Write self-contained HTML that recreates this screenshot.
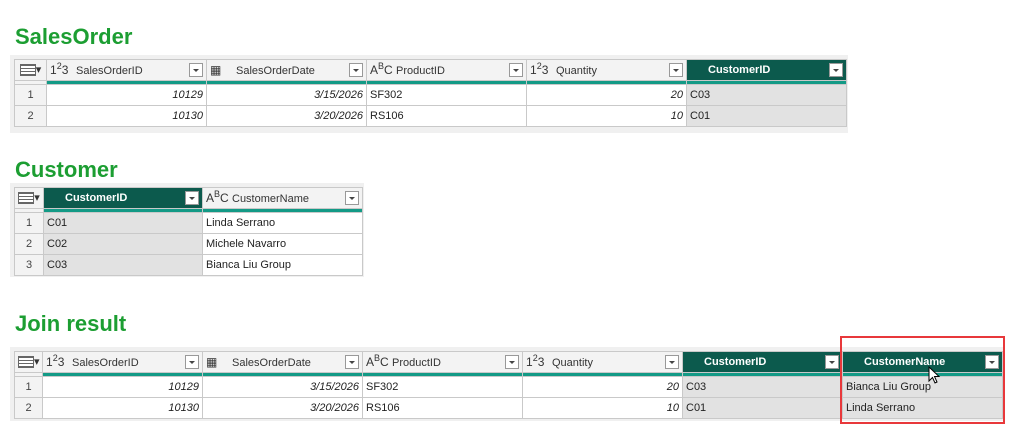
<!DOCTYPE html><html><head><style>
body{margin:0;width:1015px;height:431px;background:#fff;position:relative;overflow:hidden;font-family:"Liberation Sans",Arial,sans-serif;}
h1{position:absolute;margin:0;font-size:22px;font-weight:bold;color:#1c9e32;left:15px;}
.bg{position:absolute;background:#f0f0f0;}
table{position:absolute;border-collapse:collapse;table-layout:fixed;font-size:11px;color:#222;}
td{border:1px solid #c9c9c9;height:20px;padding:0 3px;white-space:nowrap;overflow:hidden;background:#fff;vertical-align:middle;line-height:14px;}
sup,sub{line-height:0;font-size:9px;}
tr.h td{background:#f3f3f3;height:20px;position:relative;font-size:11px;color:#333;}
tr.h td.s{background:#0c5a4d;color:#fff;font-weight:bold;}
tr.t td{height:3px;padding:0;background:#139a86;border-top:none;border-bottom:none;line-height:3px;font-size:1px;}
td.n{text-align:center;color:#444;background:#f3f3f3;}
td.r{text-align:right;font-style:italic;}
td.g{background:#e2e2e2;}
.dd{position:absolute;right:3px;top:3px;width:12px;height:12px;border:1px solid #999;background:#fff;}
.dd:after{content:"";position:absolute;left:3px;top:5px;border-left:3px solid transparent;border-right:3px solid transparent;border-top:3px solid #444;}
.ic{display:inline-block;width:26px;font-size:12px;color:#333;}
.s .lbl{padding-left:18px;}
.tb{display:inline-block;width:14px;height:10px;border:1px solid #666;background:repeating-linear-gradient(#666 0 1px,#fff 1px 3px);vertical-align:middle;}
</style></head><body>
<h1 style="top:24px">SalesOrder</h1>
<div class="bg" style="left:10px;top:55px;width:838px;height:78px"></div>
<table style="left:14px;top:59px;width:832px">
<colgroup><col style="width:32px"><col style="width:160px"><col style="width:160px"><col style="width:160px"><col style="width:160px"><col style="width:160px"></colgroup>
<tr class="h"><td class="n"><span class="tb"></span>▾</td><td><span class="ic">1<sup>2</sup>3</span>SalesOrderID<span class="dd"></span></td><td><span class="ic">▦</span>SalesOrderDate<span class="dd"></span></td><td><span class="ic">A<sup>B</sup>C</span>ProductID<span class="dd"></span></td><td><span class="ic">1<sup>2</sup>3</span>Quantity<span class="dd"></span></td><td class="s"><span class="lbl">CustomerID</span><span class="dd"></span></td></tr>
<tr class="t"><td style="background:#f3f3f3"></td><td></td><td></td><td></td><td></td><td></td></tr>
<tr><td class="n">1</td><td class="r">10129</td><td class="r">3/15/2026</td><td>SF302</td><td class="r">20</td><td class="g">C03</td></tr>
<tr><td class="n">2</td><td class="r">10130</td><td class="r">3/20/2026</td><td>RS106</td><td class="r">10</td><td class="g">C01</td></tr>
</table>

<h1 style="top:157px">Customer</h1>
<div class="bg" style="left:10px;top:183px;width:354px;height:94px"></div>
<table style="left:14px;top:187px;width:348px">
<colgroup><col style="width:29px"><col style="width:159px"><col style="width:160px"></colgroup>
<tr class="h"><td class="n"><span class="tb"></span>▾</td><td class="s"><span class="lbl">CustomerID</span><span class="dd"></span></td><td><span class="ic">A<sup>B</sup>C</span>CustomerName<span class="dd"></span></td></tr>
<tr class="t"><td style="background:#f3f3f3"></td><td></td><td></td></tr>
<tr><td class="n">1</td><td class="g">C01</td><td>Linda Serrano</td></tr>
<tr><td class="n">2</td><td class="g">C02</td><td>Michele Navarro</td></tr>
<tr><td class="n">3</td><td class="g">C03</td><td>Bianca Liu Group</td></tr>
</table>

<h1 style="top:311px">Join result</h1>
<div class="bg" style="left:10px;top:347px;width:995px;height:74px"></div>
<table style="left:14px;top:351px;width:988px">
<colgroup><col style="width:28px"><col style="width:160px"><col style="width:160px"><col style="width:160px"><col style="width:160px"><col style="width:160px"><col style="width:160px"></colgroup>
<tr class="h"><td class="n"><span class="tb"></span>▾</td><td><span class="ic">1<sup>2</sup>3</span>SalesOrderID<span class="dd"></span></td><td><span class="ic">▦</span>SalesOrderDate<span class="dd"></span></td><td><span class="ic">A<sup>B</sup>C</span>ProductID<span class="dd"></span></td><td><span class="ic">1<sup>2</sup>3</span>Quantity<span class="dd"></span></td><td class="s"><span class="lbl">CustomerID</span><span class="dd"></span></td><td class="s"><span class="lbl">CustomerName</span><span class="dd"></span></td></tr>
<tr class="t"><td style="background:#f3f3f3"></td><td></td><td></td><td></td><td></td><td></td><td></td></tr>
<tr><td class="n">1</td><td class="r">10129</td><td class="r">3/15/2026</td><td>SF302</td><td class="r">20</td><td class="g">C03</td><td class="g">Bianca Liu Group</td></tr>
<tr><td class="n">2</td><td class="r">10130</td><td class="r">3/20/2026</td><td>RS106</td><td class="r">10</td><td class="g">C01</td><td class="g">Linda Serrano</td></tr>
</table>
<div style="position:absolute;left:840px;top:336px;width:161px;height:84px;border:2px solid #e8383b"></div>
<svg style="position:absolute;left:928px;top:366px" width="14" height="20" viewBox="0 0 14 20"><path d="M1 1 L1 15 L4.5 11.5 L7 17 L9 16 L6.5 10.5 L11 10.5 Z" fill="#fff" stroke="#000" stroke-width="1"/></svg>
</body></html>
